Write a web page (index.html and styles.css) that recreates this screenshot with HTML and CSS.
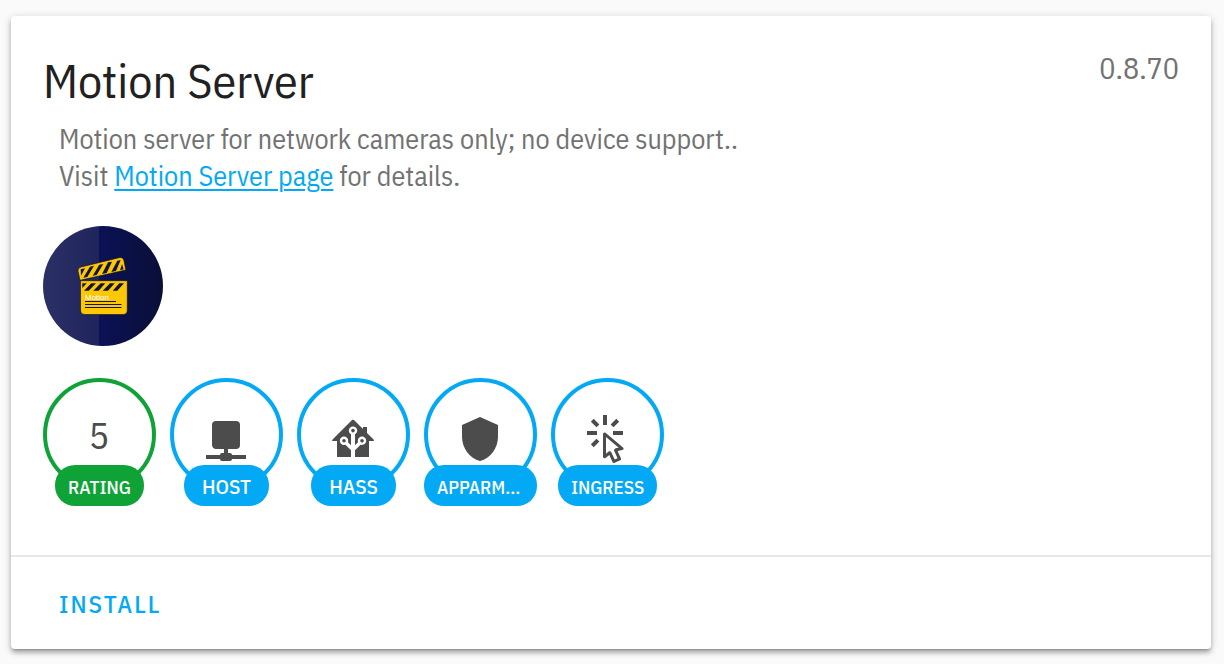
FILE: index.html
```html
<!DOCTYPE html>
<html lang="en"><head><meta charset="utf-8"><title>Motion Server</title><link rel="stylesheet" href="styles.css"></head>
<body>
<main class="card">
  <div class="content">
    <header class="header">
      <h1 class="title">Motion Server</h1>
      <span class="version">0.8.70</span>
    </header>
    <p class="description">Motion server for network cameras only; no device support..<br>Visit <a class="link" href="#">Motion Server page</a> for details.</p>
    <svg class="logo" viewBox="0 0 120 120" role="img" aria-label="Motion">
      <defs>
        <linearGradient id="left"><stop offset="0" stop-color="#2b3065"/><stop offset="1" stop-color="#20245d"/></linearGradient>
        <linearGradient id="right"><stop offset="0" stop-color="#0b1155"/><stop offset="1" stop-color="#0a0f37"/></linearGradient>
        <clipPath id="disc"><circle cx="60" cy="60" r="60"/></clipPath>
      </defs>
      <g clip-path="url(#disc)"><rect width="56" height="120" fill="url(#left)"/><rect x="56" width="64" height="120" fill="url(#right)"/></g>
      <g fill="#fdc707" stroke="#080b22" stroke-width=".6">
        <path d="M38 41 77 31.500Q80 31 80.800 34L82.800 44 37 54.300 35 45Q34.500 42 38 41Z"/>
        <path d="M37.500 54.700H84.300V84Q84.300 88.500 80 88.500H42Q37.500 88.500 37.500 84Z"/>
      </g>
      <g fill="#10153a">
        <path d="M37.700 43.300 42 42.300 38 49.700ZM47 40.700 51 39.700 44.300 51 40.300 51.700ZM56.300 38.700 60.300 38 53.700 49 49.700 49.700ZM65 36.300 69 35.700 63.700 47 59 48ZM74.300 34.700 77.700 34 73 45 68.300 46ZM79 38 80.700 43.300 77 44.300Z"/>
        <path d="M39.300 57.300H43.700L39.300 62ZM48.300 57.300H53L45.700 64.700H41ZM57.700 57.300H62.300L55.700 64.700H50.300ZM67 57.300H71.700L65 64.700H59.700ZM76.300 57.300H81L74.300 64.700H69.700Z"/>
        <path d="M42 75H73V75.900H42ZM42 78H78.500V78.900H42ZM42 81H78.500V81.900H42Z"/>
      </g>
      <text class="logo-text" x="42" y="74">Motion</text>
    </svg>
    <div class="badges">
      <div class="badge rating"><div class="circle">5</div><span class="label small">RATING</span></div>
      <div class="badge"><div class="circle"><svg class="icon" viewBox="0 0 24 24"><path d="M17,3A2,2 0 0,1 19,5V15A2,2 0 0,1 17,17H13V19H14A1,1 0 0,1 15,20H22V22H15A1,1 0 0,1 14,23H10A1,1 0 0,1 9,22H2V20H9A1,1 0 0,1 10,19H11V17H7C5.890,17 5,16.100 5,15V5A2,2 0 0,1 7,3H17Z"/></svg></div><span class="label">HOST</span></div>
      <div class="badge"><div class="circle"><svg class="icon" viewBox="0 0 24 24"><path d="M21.800,13H20V21H13V17.670L15.790,14.880L16.500,15C17.660,15 18.600,14.060 18.600,12.900C18.600,11.740 17.660,10.800 16.500,10.800A2.100,2.100 0 0,0 14.400,12.900L14.500,13.610L13,15.130V9.650C13.660,9.290 14.100,8.600 14.100,7.800A2.100,2.100 0 0,0 12,5.700A2.100,2.100 0 0,0 9.900,7.800C9.900,8.600 10.340,9.290 11,9.650V15.130L9.500,13.610L9.600,12.900A2.100,2.100 0 0,0 7.500,10.800A2.100,2.100 0 0,0 5.400,12.900A2.100,2.100 0 0,0 7.500,15L8.210,14.880L11,17.670V21H4V13H2.250C1.830,13 1.420,13 1.420,12.790C1.430,12.570 1.850,12.150 2.280,11.720L11,3C11.330,2.670 11.670,2.330 12,2.330C12.330,2.330 12.670,2.670 13,3L17,7V6H19V9L21.780,11.780C22.180,12.180 22.590,12.590 22.600,12.800C22.600,13 22.200,13 21.800,13M7.500,12A0.900,0.900 0 0,1 8.400,12.900A0.900,0.900 0 0,1 7.500,13.800A0.900,0.900 0 0,1 6.600,12.900A0.900,0.900 0 0,1 7.500,12M16.500,12C17,12 17.400,12.400 17.400,12.900C17.400,13.400 17,13.800 16.500,13.800A0.900,0.900 0 0,1 15.600,12.900A0.900,0.900 0 0,1 16.500,12M12,6.900C12.500,6.900 12.900,7.300 12.900,7.800C12.900,8.300 12.500,8.700 12,8.700C11.500,8.700 11.100,8.300 11.100,7.800C11.100,7.300 11.500,6.900 12,6.900Z"/></svg></div><span class="label">HASS</span></div>
      <div class="badge"><div class="circle"><svg class="icon" viewBox="0 0 24 24"><path d="M12,1L3,5V11C3,16.550 6.840,21.740 12,23C17.160,21.740 21,16.550 21,11V5L12,1Z"/></svg></div><span class="label small wide">APPARM...</span></div>
      <div class="badge"><div class="circle"><svg class="icon" viewBox="0 0 24 24"><path d="M11.500,11L17.880,16.370L17,16.550L16.360,16.670C15.730,16.800 15.370,17.500 15.650,18.070L15.920,18.650L17.280,21.590L15.860,22.250L14.500,19.320L14.240,18.740C13.970,18.150 13.220,17.970 12.720,18.380L12.210,18.780L11.500,19.350V11M10.760,8.690A0.760,0.760 0 0,0 10,9.450V20.900C10,21.320 10.340,21.660 10.760,21.660C10.950,21.660 11.110,21.600 11.240,21.500L13.150,19.950L14.810,23.570C14.940,23.840 15.210,24 15.500,24C15.610,24 15.720,24 15.830,23.920L18.590,22.640C18.970,22.460 19.150,22 18.950,21.630L17.280,18L19.690,17.550C19.850,17.500 20,17.430 20.120,17.290C20.390,16.970 20.350,16.500 20,16.210L11.260,8.860L11.250,8.870C11.120,8.760 10.950,8.690 10.760,8.690M15,10V8H20V10H15M13.830,4.760L16.660,1.930L18.070,3.340L15.240,6.170L13.830,4.760M10,0H12V5H10V0M3.930,14.660L6.760,11.830L8.170,13.240L5.340,16.070L3.930,14.660M3.930,3.340L5.340,1.930L8.170,4.760L6.760,6.170L3.930,3.340M7,10H2V8H7V10"/></svg></div><span class="label small">INGRESS</span></div>
    </div>
  </div>
  <footer class="actions"><button class="install" type="button">INSTALL</button></footer>
</main>
</body></html>
```
FILE: styles.css
```css
* { box-sizing: border-box; }
body { margin: 0; padding: 16px 13px 15px 11px; background: #fafafa; font-family: "IBM Plex Sans Condensed", "Liberation Sans Narrow", Roboto, sans-serif; color: #212121; }
.card { background: #fff; border-radius: 4px; box-shadow: 0 4px 4px rgba(0,0,0,.2), 0 2px 8px rgba(0,0,0,.2), 0 3px 2px -2px rgba(0,0,0,.2); }
.content { padding: 32px 32px 49px; }
.header { display: flex; justify-content: space-between; align-items: flex-start; }
.title { margin: 0; font-size: 48px; line-height: 64px; font-weight: 400; }
.version { font-size: 30px; line-height: 40px; color: #727272; }
.description { margin: 8px 16px 32px; font-size: 28px; line-height: 37px; color: #727272; }
.link { color: #03a9f4; text-decoration-thickness: 2px; text-underline-offset: 3px; }
.logo { display: block; width: 120px; height: 120px; margin-bottom: 32px; }
.logo-text { fill: #fff; font: 8px "Liberation Sans", sans-serif; }
.badges { display: flex; flex-wrap: wrap; gap: 14px; }
.badge { --tone: #03a9f4; width: 113px; display: flex; flex-direction: column; align-items: center; }
.rating { --tone: #0fa337; }
.circle { width: 113px; height: 113px; border: 4px solid var(--tone); border-radius: 50%; display: flex; align-items: center; justify-content: center; font-size: 38px; line-height: 48px; color: #4c4c4c; padding: 0 1px 0 0; }
.icon { width: 48px; height: 48px; margin-top: 8px; fill: #4c4c4c; }
.label { position: relative; min-width: 85px; max-width: 100%; height: 41px; margin-top: -26px; padding: 0 13px; border-radius: 20px; background: var(--tone); color: #fff; font-size: 21px; line-height: 43px; font-weight: 500; text-align: center; white-space: nowrap; }
.small { font-size: 19px; line-height: 45px; }
.wide { width: 100%; text-align: left; }
.actions { border-top: 2px solid #e8e8e8; padding: 12px 16px; }
.install { border: 0; background: none; padding: 0 32px; height: 68px; color: #03a9f4; font-family: inherit; font-size: 25px; font-weight: 500; letter-spacing: 2px; }
```
